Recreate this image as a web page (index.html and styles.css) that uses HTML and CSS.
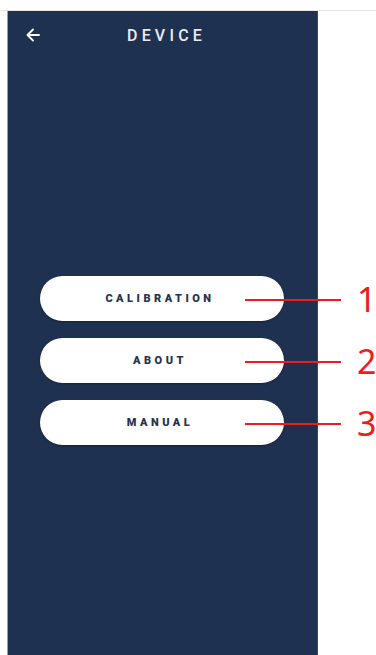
FILE: index.html
```html
<!DOCTYPE html>
<html lang="en">
<head>
    <meta charset="UTF-8">
    <meta name="viewport" content="width=device-width, initial-scale=1.0">
    <title>Device</title>
    <link rel="stylesheet" href="styles.css">
</head>
<body>
    <div class="topline"></div>
    <div class="screen">
        <div class="header">
            <svg class="back" width="14" height="14" viewBox="0 0 14 14">
                <path d="M13 7H2M7 1.5L1.5 7L7 12.5" fill="none" stroke="#fff" stroke-width="1.8" stroke-linecap="round" stroke-linejoin="round"/>
            </svg>
            <div class="title">DEVICE</div>
        </div>
        <div class="menu">
            <div class="row">
                <button class="menu-btn">CALIBRATION</button>
                <div class="callout"><span class="line"></span><span class="num">1</span></div>
            </div>
            <div class="row">
                <button class="menu-btn">ABOUT</button>
                <div class="callout"><span class="line"></span><span class="num">2</span></div>
            </div>
            <div class="row">
                <button class="menu-btn">MANUAL</button>
                <div class="callout"><span class="line"></span><span class="num">3</span></div>
            </div>
        </div>
    </div>
</body>
</html>
```

FILE: styles.css
```css
body {
    margin: 0;
    background-color: #fff;
    font-family: Roboto, "Liberation Sans", sans-serif;
    height: 655px;
    overflow: hidden;
}

.topline {
    height: 10px;
    border-bottom: 1px solid #e6e6e6;
}

.screen {
    margin-left: 7px;
    width: 311px;
    height: 644px;
    background-color: #1f3151;
    border-left: 1px solid #9aa0aa;
    border-right: 1px solid #2b4a80;
    box-sizing: border-box;
}

.header {
    position: relative;
    height: 48px;
    display: flex;
    align-items: center;
    justify-content: center;
}

.back {
    position: absolute;
    left: 18px;
    top: 17px;
}

.title {
    color: #e8ecf2;
    font-size: 16px;
    font-weight: 500;
    letter-spacing: 4.2px;
    margin-left: 8px;
}

.menu {
    margin-top: 217px;
    display: flex;
    flex-direction: column;
    align-items: center;
    gap: 17px;
}

.row {
    position: relative;
    margin-left: -1px;
}

.menu-btn {
    width: 244px;
    height: 45px;
    border: none;
    border-radius: 23px;
    background-color: #fff;
    box-shadow: 0 1px 2px rgba(0, 0, 0, 0.35);
    color: #27324f;
    font-family: Roboto, "Liberation Sans", sans-serif;
    font-weight: 900;
    font-size: 11px;
    letter-spacing: 3.5px;
    padding: 0 4px 0 0;
}

.callout {
    position: absolute;
    left: 205px;
    top: 0;
    height: 45px;
    display: flex;
    align-items: center;
}

.line {
    width: 96px;
    height: 2px;
    background-color: #f01c1c;
    margin-top: 3px;
}

.num {
    color: #f01c1c;
    font-family: "Noto Sans", "DejaVu Sans", sans-serif;
    font-size: 34px;
    margin-left: 16px;
    line-height: 1;
}
```
